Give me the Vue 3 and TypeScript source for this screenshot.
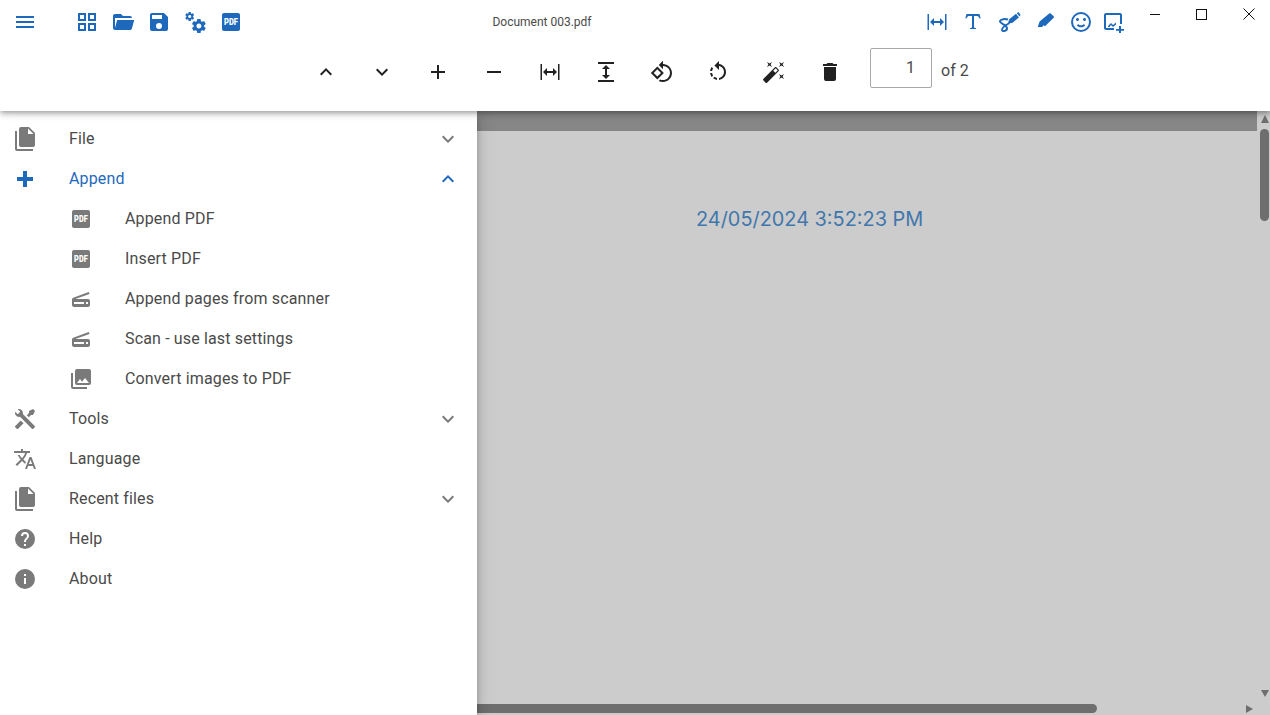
<script setup lang="ts">
const p = {
  menu: 'M3,6H21V8H3V6M3,11H21V13H3V11M3,16H21V18H3V16Z',
  grid: 'M3 11H11V3H3M5 5H9V9H5M13 21H21V13H13M15 15H19V19H15M3 21H11V13H3M5 15H9V19H5M13 3V11H21V3M19 9H15V5H19Z',
  open: 'M19,20H4C2.89,20 2,19.1 2,18V6C2,4.89 2.89,4 4,4H10L12,6H19A2,2 0 0,1 21,8H21L4,8V18L6.14,10H23.21L20.93,18.5C20.7,19.37 19.92,20 19,20Z',
  save: 'M15,9H5V5H15M12,19A3,3 0 0,1 9,16A3,3 0 0,1 12,13A3,3 0 0,1 15,16A3,3 0 0,1 12,19M17,3H5C3.89,3 3,3.9 3,5V19A2,2 0 0,0 5,21H19A2,2 0 0,0 21,19V7L17,3Z',
  cogs: 'M15.9,18.45C17.25,18.45 18.35,17.35 18.35,16C18.35,14.65 17.25,13.55 15.9,13.55C14.54,13.55 13.45,14.65 13.45,16C13.45,17.35 14.54,18.45 15.9,18.45M21.1,16.68L22.58,17.84C22.71,17.95 22.75,18.13 22.66,18.29L21.26,20.71C21.17,20.86 21,20.92 20.83,20.86L19.09,20.16C18.73,20.44 18.34,20.67 17.91,20.85L17.64,22.7C17.62,22.87 17.47,23 17.3,23H14.5C14.32,23 14.18,22.87 14.15,22.7L13.89,20.85C13.46,20.67 13.07,20.44 12.71,20.16L10.96,20.86C10.81,20.92 10.62,20.86 10.54,20.71L9.14,18.29C9.05,18.13 9.09,17.95 9.22,17.84L10.7,16.68L10.65,16L10.7,15.31L9.22,14.16C9.09,14.05 9.05,13.86 9.14,13.71L10.54,11.29C10.62,11.13 10.81,11.07 10.96,11.13L12.71,11.84C13.07,11.56 13.46,11.32 13.89,11.15L14.15,9.29C14.18,9.13 14.32,9 14.5,9H17.3C17.47,9 17.62,9.13 17.64,9.29L17.91,11.15C18.34,11.32 18.73,11.56 19.09,11.84L20.83,11.13C21,11.07 21.17,11.13 21.26,11.29L22.66,13.71C22.75,13.86 22.71,14.05 22.58,14.16L21.1,15.31L21.15,16L21.1,16.68M6.69,8.07C7.56,8.07 8.26,7.37 8.26,6.5C8.26,5.63 7.56,4.92 6.69,4.92A1.58,1.58 0 0,0 5.11,6.5C5.11,7.37 5.82,8.07 6.69,8.07M10.03,6.94L11,7.68C11.07,7.75 11.09,7.87 11.03,7.97L10.13,9.53C10.08,9.63 9.96,9.67 9.86,9.63L8.74,9.18L8,9.62L7.81,10.81C7.79,10.92 7.7,11 7.59,11H5.79C5.67,11 5.58,10.92 5.56,10.81L5.4,9.62L4.64,9.18L3.5,9.63C3.41,9.67 3.3,9.63 3.24,9.53L2.34,7.97C2.28,7.87 2.31,7.75 2.39,7.68L3.34,6.94L3.31,6.5L3.34,6.06L2.39,5.32C2.31,5.25 2.28,5.13 2.34,5.03L3.24,3.47C3.3,3.37 3.41,3.33 3.5,3.37L4.63,3.82L5.4,3.38L5.56,2.19C5.58,2.08 5.67,2 5.79,2H7.59C7.7,2 7.79,2.08 7.81,2.19L8,3.38L8.74,3.82L9.86,3.37C9.96,3.33 10.08,3.37 10.13,3.47L11.03,5.03C11.09,5.13 11.07,5.25 11,5.32L10.03,6.06L10.06,6.5L10.03,6.94Z',
  box: 'M5 3H19C20.1 3 21 3.9 21 5V19C21 20.1 20.1 21 19 21H5C3.9 21 3 20.1 3 19V5C3 3.9 3.9 3 5 3Z',
  fitW: 'M9,11H15V8L19,12L15,16V13H9V16L5,12L9,8V11M2.5,20V4H4V20H2.5M20,20V4H21.5V20H20Z',
  fitH: 'M13,9V15H16L12,19L8,15H11V9H8L12,5L16,9H13M4,2H20V4H4V2M4,20H20V22H4V20Z',
  text: 'M18.5,4L19.66,8.35L18.7,8.61C18.25,7.74 17.79,6.87 17.26,6.43C16.73,6 16.11,6 15.5,6H13V16.5C13,17 13,17.5 13.33,17.75C13.67,18 14.33,18 15,18V19H9V18C9.67,18 10.33,18 10.67,17.75C11,17.5 11,17 11,16.5V6H8.5C7.89,6 7.27,6 6.74,6.43C6.21,6.87 5.75,7.74 5.3,8.61L4.34,8.35L5.5,4H18.5Z',
  marker: 'M4.7 16.9L6.6 11.6L16.2 3.6C16.7 3.2 17.3 3.2 17.7 3.6L20.7 6.3C21.1 6.7 21.1 7.3 20.7 7.7L12 16.2L10.6 15.2L9.2 16.9Z',
  smile: 'M20,12A8,8 0 0,0 12,4A8,8 0 0,0 4,12A8,8 0 0,0 12,20A8,8 0 0,0 20,12M22,12A10,10 0 0,1 12,22A10,10 0 0,1 2,12A10,10 0 0,1 12,2A10,10 0 0,1 22,12M10,9.5C10,10.3 9.3,11 8.5,11C7.7,11 7,10.3 7,9.5C7,8.7 7.7,8 8.5,8C9.3,8 10,8.7 10,9.5M17,9.5C17,10.3 16.3,11 15.5,11C14.7,11 14,10.3 14,9.5C14,8.7 14.7,8 15.5,8C16.3,8 17,8.7 17,9.5M12,17.23C10.25,17.23 8.71,16.5 7.81,15.42L9.23,14C9.68,14.72 10.75,15.23 12,15.23C13.25,15.23 14.32,14.72 14.77,14L16.19,15.42C15.29,16.5 13.75,17.23 12,17.23Z',
  up: 'M7.41,15.41L12,10.83L16.59,15.41L18,14L12,8L6,14L7.41,15.41Z',
  down: 'M7.41,8.58L12,13.17L16.59,8.58L18,10L12,16L6,10L7.41,8.58Z',
  plus: 'M19,13H13V19H11V13H5V11H11V5H13V11H19V13Z',
  minus: 'M19,13H5V11H19V13Z',
  rotPage: 'M7.34,6.41L0.86,12.9L7.35,19.38L13.84,12.9L7.34,6.41M3.69,12.9L7.35,9.24L11,12.9L7.34,16.56L3.69,12.9M19.36,6.64C17.61,4.88 15.3,4 13,4V0.76L8.76,5L13,9.24V6C14.79,6 16.58,6.68 17.95,8.05C20.68,10.78 20.68,15.22 17.95,17.95C16.58,19.32 14.79,20 13,20C12.03,20 11.06,19.79 10.16,19.39L8.67,20.88C10,21.62 11.5,22 13,22C15.3,22 17.61,21.12 19.36,19.36C22.88,15.85 22.88,10.15 19.36,6.64Z',
  rotLeft: 'M13,4.07V1L8.45,5.55L13,10V6.09C15.84,6.57 18,9.03 18,12C18,14.97 15.84,17.43 13,17.91V19.93C16.95,19.44 20,16.08 20,12C20,7.92 16.95,4.56 13,4.07M7.1,18.32C8.26,19.22 9.61,19.76 11,19.93V17.9C10.13,17.75 9.29,17.41 8.54,16.87L7.1,18.32M6.09,13H4.07C4.24,14.39 4.79,15.73 5.69,16.89L7.1,15.47C6.58,14.72 6.23,13.88 6.09,13M7.11,8.53L5.7,7.11C4.8,8.27 4.24,9.61 4.07,11H6.09C6.23,10.13 6.58,9.28 7.11,8.53Z',
  wand: 'M7.5,5.6L5,7L6.4,4.5L5,2L7.5,3.4L10,2L8.6,4.5L10,7L7.5,5.6M19.5,15.4L22,14L20.6,16.5L22,19L19.5,17.6L17,19L18.4,16.5L17,14L19.5,15.4M22,2L20.6,4.5L22,7L19.5,5.6L17,7L18.4,4.5L17,2L19.5,3.4L22,2M13.34,12.78L15.78,10.34L13.66,8.22L11.22,10.66L13.34,12.78M14.37,7.29L16.71,9.63C17.1,10 17.1,10.65 16.71,11.04L5.04,22.71C4.65,23.1 4,23.1 3.63,22.71L1.29,20.37C0.9,20 0.9,19.35 1.29,18.96L12.96,7.29C13.35,6.9 14,6.9 14.37,7.29Z',
  trash: 'M19,4H15.5L14.5,3H9.5L8.5,4H5V6H19M6,19A2,2 0 0,0 8,21H16A2,2 0 0,0 18,19V7H6V19Z',
  files: 'M15,7H20.5L15,1.5V7M8,0H16L22,6V18A2,2 0 0,1 20,20H8C6.89,20 6,19.1 6,18V2A2,2 0 0,1 8,0M4,4V22H20V24H4A2,2 0 0,1 2,22V4H4Z',
  thick: 'M20 14H14V20H10V14H4V10H10V4H14V10H20V14Z',
  scanner: 'M4.2 10.7L19.8 5L20.5 6.9L6.4 12H19C20.1 12 21 12.9 21 14V18C21 19.1 20.1 20 19 20H5C3.9 20 3 19.1 3 18V12.5C3 11.7 3.5 10.9 4.2 10.7M17 17H19V15H17V17M5 17H15V15H5V17Z',
  images: 'M22,16V4A2,2 0 0,0 20,2H8A2,2 0 0,0 6,4V16A2,2 0 0,0 8,18H20A2,2 0 0,0 22,16M11,12L13.03,14.71L16,11L20,16H8M2,6V20A2,2 0 0,0 4,22H18V20H4V6',
  tools: 'M21.71 20.29L20.29 21.71A1 1 0 0 1 18.88 21.71L7 9.85A3.81 3.81 0 0 1 6 10A4 4 0 0 1 2.22 4.7L4.76 7.24L5.29 6.71L6.71 5.29L7.24 4.76L4.7 2.22A4 4 0 0 1 10 6A3.81 3.81 0 0 1 9.85 7L21.71 18.88A1 1 0 0 1 21.71 20.29M2.29 18.88A1 1 0 0 0 2.29 20.29L3.71 21.71A1 1 0 0 0 5.12 21.71L10.59 16.25L7.76 13.42M20 2L16 4V6L13.83 8.17L15.83 10.17L18 8H20L22 4Z',
  lang: 'M12.87,15.07L10.33,12.56L10.36,12.53C12.1,10.59 13.34,8.36 14.07,6H17V4H10V2H8V4H1V6H12.17C11.5,7.92 10.44,9.75 9,11.35C8.07,10.32 7.3,9.19 6.69,8H4.69C5.42,9.63 6.42,11.17 7.67,12.56L2.58,17.58L4,19L9,14L12.11,17.11L12.87,15.07M18.5,10H16.5L12,22H14L15.12,19H19.87L21,22H23L18.5,10M15.88,17L17.5,12.67L19.12,17H15.88Z',
  help: 'M15.07,11.25L14.17,12.17C13.45,12.89 13,13.5 13,15H11V14.5C11,13.39 11.45,12.39 12.17,11.67L13.41,10.41C13.78,10.05 14,9.55 14,9C14,7.89 13.1,7 12,7A2,2 0 0,0 10,9H8A4,4 0 0,1 12,5A4,4 0 0,1 16,9C16,9.88 15.64,10.67 15.07,11.25M13,19H11V17H13M12,2A10,10 0 0,0 2,12A10,10 0 0,0 12,22A10,10 0 0,0 22,12C22,6.47 17.5,2 12,2Z',
  info: 'M13,9H11V7H13M13,17H11V11H13M12,2A10,10 0 0,0 2,12A10,10 0 0,0 12,22A10,10 0 0,0 22,12A10,10 0 0,0 12,2Z',
}

const pageTools = [p.up, p.down, p.plus, p.minus, p.fitW, p.fitH, p.rotPage, p.rotLeft, p.wand, p.trash]

interface MenuRow {
  label: string
  icon: string
  sub?: boolean
  pdf?: boolean
  active?: boolean
  chevron?: string
}

const rows: MenuRow[] = [
  { label: 'File', icon: p.files, chevron: p.down },
  { label: 'Append', icon: p.thick, active: true, chevron: p.up },
  { label: 'Append PDF', icon: p.box, sub: true, pdf: true },
  { label: 'Insert PDF', icon: p.box, sub: true, pdf: true },
  { label: 'Append pages from scanner', icon: p.scanner, sub: true },
  { label: 'Scan - use last settings', icon: p.scanner, sub: true },
  { label: 'Convert images to PDF', icon: p.images, sub: true },
  { label: 'Tools', icon: p.tools, chevron: p.down },
  { label: 'Language', icon: p.lang },
  { label: 'Recent files', icon: p.files, chevron: p.down },
  { label: 'Help', icon: p.help },
  { label: 'About', icon: p.info },
]
</script>

<template>
  <div class="app">
    <header class="toolbar">
      <div class="row-top">
        <button class="btn menu-btn"><svg viewBox="0 0 24 24"><path :d="p.menu" /></svg></button>
        <div class="group">
          <button v-for="d in [p.grid, p.open, p.save, p.cogs]" :key="d" class="btn">
            <svg viewBox="0 0 24 24"><path :d="d" /></svg>
          </button>
          <button class="btn">
            <svg viewBox="0 0 24 24">
              <path :d="p.box" />
              <text class="pdf" x="12" y="15" textLength="14" lengthAdjust="spacingAndGlyphs">PDF</text>
            </svg>
          </button>
        </div>
        <div class="title">Document 003.pdf</div>
        <div class="group">
          <button class="btn"><svg viewBox="0 0 24 24"><path :d="p.fitW" /></svg></button>
          <button class="btn"><svg viewBox="0 0 24 24"><path :d="p.text" /></svg></button>
          <button class="btn">
            <svg viewBox="0 0 24 24">
              <path class="line" d="M11 9.5C8 8.6 3.6 9 3 11C2.4 13.5 9.6 14.5 10 18C10.3 21 5.5 22 5 20C4.6 18.2 9 15 12.5 13" />
              <path d="M11 13.2L12.2 9.3L19 3.8L22 7.4L15.2 12.9Z M19.8 3.2L20.6 2.5C21 2.2 21.5 2.2 21.8 2.6L23.2 4.3C23.5 4.7 23.5 5.2 23.1 5.5L22.6 6.6Z" />
            </svg>
          </button>
          <button class="btn"><svg viewBox="0 0 24 24"><path :d="p.marker" /></svg></button>
          <button class="btn"><svg viewBox="0 0 24 24"><path :d="p.smile" /></svg></button>
          <button class="btn narrow">
            <svg viewBox="0 0 24 24">
              <path d="M3 3H17C18.1 3 19 3.9 19 5V14H17V5H3V18H11V20H3C1.9 20 1 19.1 1 18V5C1 3.9 1.9 3 3 3Z" />
              <path d="M5 16L8 13L10 15L13 12.5V14.5L10 17L8 15L6.5 17H5Z" />
              <path d="M16 16H18V19H21V20.8H18V23H16V20.8H13V19H16Z" />
            </svg>
          </button>
        </div>
        <div class="win">
          <button class="win-btn"><span class="w-min"></span></button>
          <button class="win-btn"><span class="w-max"></span></button>
          <button class="win-btn">
            <svg viewBox="0 0 12 12" width="12" height="12"><path d="M0.5 0.5L11.5 11.5M11.5 0.5L0.5 11.5" /></svg>
          </button>
        </div>
      </div>

      <div class="row-pages">
        <button v-for="d in pageTools" :key="d" class="btn page-btn">
          <svg viewBox="0 0 24 24"><path :d="d" /></svg>
        </button>
        <div class="page-input">1</div>
        <span class="page-total">of 2</span>
      </div>
    </header>

    <div class="body">
      <nav class="drawer">
        <div v-for="r in rows" :key="r.label" class="item" :class="{ sub: r.sub, active: r.active }">
          <svg class="item-icon" viewBox="0 0 24 24">
            <path :d="r.icon" />
            <text v-if="r.pdf" class="pdf" x="12" y="15" textLength="14" lengthAdjust="spacingAndGlyphs">PDF</text>
          </svg>
          <span class="item-label">{{ r.label }}</span>
          <svg v-if="r.chevron" class="chev" viewBox="0 0 24 24"><path :d="r.chevron" /></svg>
        </div>
      </nav>

      <main class="viewer">
        <div class="band"></div>
        <div class="date">24/05/2024 3:52:23 PM</div>

        <!-- scrollbars sit over the page -->
        <div class="sb-corner"></div>
        <span class="arrow a-up"></span>
        <span class="thumb-v"></span>
        <span class="arrow a-down"></span>
        <span class="thumb-h"></span>
        <span class="arrow a-right"></span>
      </main>
    </div>
  </div>
</template>

<style>
html, body { margin: 0; background: #fff; }
</style>

<style scoped>
.app {
  width: 1270px;
  height: 715px;
  overflow: hidden;
  display: flex;
  flex-direction: column;
  font-family: Roboto, 'Liberation Sans', sans-serif;
  color: #4a4a4a;
}
button {
  border: 0;
  padding: 0;
  background: none;
  color: inherit;
  display: flex;
  align-items: center;
  justify-content: center;
}

/* toolbar */
.toolbar {
  height: 111px;
  flex: none;
  background: #fff;
  position: relative;
  z-index: 3;
  box-shadow: 0 2px 4px -1px rgba(0, 0, 0, 0.2), 0 4px 5px rgba(0, 0, 0, 0.14), 0 1px 10px rgba(0, 0, 0, 0.12);
}
.row-top {
  height: 44px;
  display: flex;
  align-items: center;
}
.btn {
  width: 36px;
  height: 44px;
  flex: none;
}
.btn svg {
  width: 24px;
  height: 24px;
  fill: #1f69bd;
}
.btn.narrow { width: 32px; }
.menu-btn { margin-left: 7px; margin-right: 26px; }
.group { display: flex; }
.title {
  flex: 1;
  text-align: center;
  font-size: 12px;
  padding-right: 84px;
}
.pdf {
  fill: #fff;
  font-family: Roboto, sans-serif;
  font-size: 8.5px;
  font-weight: 900;
  text-anchor: middle;
}
.line {
  fill: none !important;
  stroke: #1f69bd;
  stroke-width: 2;
}
.win {
  width: 139px;
  flex: none;
  align-self: flex-start;
  display: flex;
}
.win-btn {
  width: 47px;
  height: 28px;
  flex: none;
}
.w-min { width: 10px; height: 1px; background: #111; }
.w-max { width: 9px; height: 9px; border: 1px solid #111; }
.win-btn svg { fill: none; stroke: #111; stroke-width: 1; }

.row-pages {
  display: flex;
  align-items: flex-start;
  padding: 4px 0 0 298px;
}
.page-btn {
  width: 56px;
  height: 48px;
}
.page-btn svg { fill: #212121; }
.page-input {
  width: 62px;
  height: 40px;
  margin-left: 12px;
  box-sizing: border-box;
  border: 1px solid #a8a8a8;
  border-radius: 2px;
  padding-right: 16px;
  text-align: right;
  font-size: 16px;
  line-height: 37px;
}
.page-total {
  margin-left: 9px;
  font-size: 16px;
  line-height: 45px;
}

/* below the toolbar */
.body {
  flex: 1;
  min-height: 0;
  display: flex;
}
.drawer {
  width: 477px;
  flex: none;
  box-sizing: border-box;
  padding-top: 7px;
  background: #fff;
  position: relative;
  z-index: 2;
  box-shadow: 0 3px 5px -1px rgba(0, 0, 0, 0.2), 0 6px 10px rgba(0, 0, 0, 0.14), 0 1px 18px rgba(0, 0, 0, 0.12);
}
.item {
  height: 40px;
  display: flex;
  align-items: center;
  gap: 32px;
  padding: 0 17px 0 13px;
  font-size: 16px;
  letter-spacing: 0.15px;
}
.item.sub { padding-left: 69px; }
.item-icon, .chev {
  width: 24px;
  height: 24px;
  flex: none;
  margin-top: 1px;
  fill: #7a7a7a;
}
.chev { margin-left: auto; }
.item.active { color: #1f69bd; }
.item.active .item-icon, .item.active .chev { fill: #1f69bd; }

.viewer {
  flex: 1;
  position: relative;
  background: #ccc;
  overflow: hidden;
}
.band {
  height: 20px;
  margin-right: 13px;
  background: #868686;
}
.date {
  margin: 76px 0 0 219px;
  font-family: Inter, 'Noto Sans', sans-serif;
  font-size: 19.9px;
  line-height: 24px;
  color: #3f77ad;
}
.sb-corner {
  position: absolute;
  top: 0;
  right: 0;
  width: 13px;
  height: 20px;
  background: #ccc;
}
.thumb-v {
  position: absolute;
  top: 18px;
  right: 1px;
  width: 9px;
  height: 92px;
  border-radius: 5px;
  background: #6e6e6e;
}
.thumb-h {
  position: absolute;
  left: 0;
  bottom: 2px;
  width: 620px;
  height: 9px;
  border-radius: 0 5px 5px 0;
  background: #6e6e6e;
}
.arrow {
  position: absolute;
  width: 0;
  height: 0;
  border: 4.5px solid transparent;
}
.a-up { top: 0; right: 1.5px; border-top: 0; border-bottom: 8px solid #6e6e6e; transform: translateY(4px); }
.a-down { bottom: 18px; right: 1.5px; border-bottom: 0; border-top: 7px solid #6e6e6e; }
.a-right { bottom: 2px; left: 769px; border-right: 0; border-left: 7px solid #6e6e6e; }
</style>
